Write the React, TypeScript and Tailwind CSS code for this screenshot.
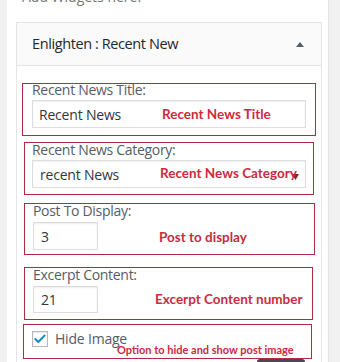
import { Check } from 'lucide-react';

const sans = "font-['Open_Sans','Noto_Sans',sans-serif]";
const note = "absolute font-['Lato',sans-serif] font-bold text-[13.5px] leading-[16px] text-[#cc2a3f] whitespace-nowrap";
const box = 'relative border border-[#b3293e]';
const label = 'block -mt-[1px] text-[14px] leading-[16px] tracking-[-0.3px] text-[#555d66] whitespace-nowrap';
const field = 'border border-[#dddddd] bg-white shadow-[inset_0_1px_2px_rgba(0,0,0,0.07)] text-[14px] tracking-[-0.2px] text-[#32373c] flex items-center';

export default function App() {
    return (
        <div className={`w-[340px] h-[362px] overflow-hidden bg-[#f1f1f1] flex ${sans}`}>
            <div className="w-[7px] shrink-0" />

            <div className="w-[322px] shrink-0 bg-white border-r border-[#e2e4e7] pl-[9px]">
                <div className="-mt-[11px] pl-[6px] text-[14px] leading-[16px] text-[#72777c]">Add Widgets here.</div>

                <div className="mt-[17px] w-[306px] border border-[#e5e5e5]">
                    {/* widget header */}
                    <div className="h-[43px] bg-[#fafafa] border-b border-[#e5e5e5] flex items-center justify-between pl-[15px] pr-[17px]">
                        <h3 className="text-[14.5px] text-[#23282d] tracking-[-0.4px]">Enlighten : Recent New</h3>
                        <svg width="8" height="5" viewBox="0 0 8 5" className="mt-[1px]">
                            <path d="M0 5 L4 0 L8 5 Z" fill="#555d66" />
                        </svg>
                    </div>

                    <div className="pt-[17px] pb-[20px]">
                        {/* title */}
                        <div className={`${box} ml-[5px] w-[294px] pl-[9px] pb-[7px]`}>
                            <label className={`${label} -mt-[2px]`}>Recent News Title:</label>
                            <div className={`${field} mt-[2px] w-[274px] h-[28px] pl-[6px]`}>Recent News</div>
                            <span className={`${note} left-[139px] top-[22px]`}>Recent News Title</span>
                        </div>

                        {/* category */}
                        <div className={`${box} mt-[6px] ml-[7px] w-[290px] pl-[7px] pb-[6px]`}>
                            <label className={label}>Recent News Category:</label>
                            <div className={`${field} mt-[2px] w-[274px] h-[28px] pl-[7px]`}>recent News</div>
                            <svg width="7" height="6" viewBox="0 0 7 6" className="absolute left-[267px] top-[31px]">
                                <path d="M0 0 L7 0 L3.5 6 Z" fill="#8e1d2e" />
                            </svg>
                            <span className={`${note} left-[135px] top-[22px]`}>Recent News Category</span>
                        </div>

                        {/* post count */}
                        <div className={`${box} mt-[8px] ml-[7px] w-[291px] pl-[8px] pb-[4px]`}>
                            <label className={label}>Post To Display:</label>
                            <div className={`${field} mt-[3px] w-[65px] h-[28px] pl-[7px]`}>3</div>
                            <span className={`${note} left-[134px] top-[25px]`}>Post to display</span>
                        </div>

                        {/* excerpt */}
                        <div className={`${box} mt-[12px] ml-[7px] w-[289px] pl-[8px] pb-[6px]`}>
                            <label className={label}>Excerpt Content:</label>
                            <div className={`${field} mt-[3px] w-[65px] h-[27px] pl-[7px]`}>21</div>
                            <span className={`${note} left-[130px] top-[23px]`}>Excerpt Content number</span>
                        </div>

                        {/* hide image */}
                        <div className={`${box} mt-[4px] ml-[6px] w-[289px] h-[35px] pl-[8px] pt-[6px]`}>
                            <div className="flex items-center gap-[7px]">
                                <span className="w-[16px] h-[16px] border border-[#b4b9be] bg-white shadow-[inset_0_1px_2px_rgba(0,0,0,0.1)] flex items-center justify-center">
                                    <Check size={14} strokeWidth={3.5} color="#1e8cbe" />
                                </span>
                                <span className="text-[14px] leading-[16px] tracking-[-0.2px] text-[#555d66]">Hide Image</span>
                            </div>
                            <span className="absolute left-[93px] top-[18px] font-['Lato',sans-serif] font-bold text-[11px] leading-[14px] text-[#cc2a3f] whitespace-nowrap">
                                Option to hide and show post image
                            </span>
                        </div>

                        <div className="ml-[240px] w-[48px] h-[8px] rounded-t-[3px] bg-[#4b4856]" />
                    </div>
                </div>
            </div>

            <div className="flex-1" />
        </div>
    );
}
